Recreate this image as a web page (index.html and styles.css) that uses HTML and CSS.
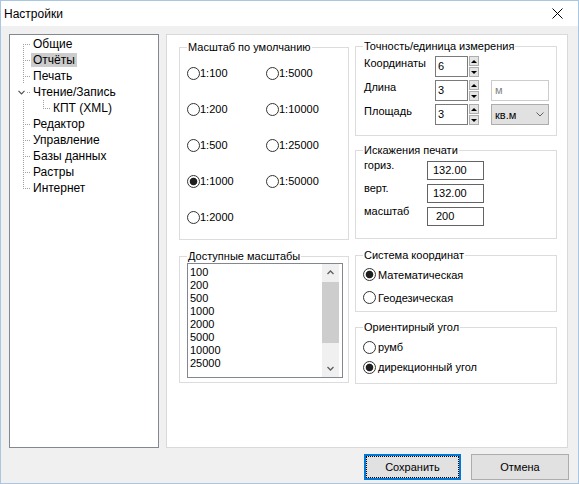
FILE: index.html
```html
<!DOCTYPE html>
<html lang="ru">
<head>
    <meta charset="UTF-8">
    <title>Настройки</title>
    <link rel="stylesheet" href="styles.css">
</head>
<body>
    <div class="window">
        <div class="titlebar">
            <span class="title">Настройки</span>
            <svg class="close" width="11" height="11" viewBox="0 0 11 11">
                <path d="M0.5 0.5 L10.5 10.5 M10.5 0.5 L0.5 10.5" stroke="#000" stroke-width="1" fill="none"/>
            </svg>
        </div>

        <div class="client">
            <div class="main">
                <ul class="tree">
                    <li class="node first"><span class="label">Общие</span></li>
                    <li class="node"><span class="label selected">Отчёты</span></li>
                    <li class="node"><span class="label">Печать</span></li>
                    <li class="node open">
                        <svg class="expander" width="7" height="5" viewBox="0 0 7 5">
                            <path d="M0.5 0.8 L3.5 3.8 L6.5 0.8" stroke="#505050" stroke-width="1.2" fill="none"/>
                        </svg>
                        <span class="label">Чтение/Запись</span>
                    </li>
                    <li class="node child"><span class="label">КПТ (XML)</span></li>
                    <li class="node"><span class="label">Редактор</span></li>
                    <li class="node"><span class="label">Управление</span></li>
                    <li class="node"><span class="label">Базы данных</span></li>
                    <li class="node"><span class="label">Растры</span></li>
                    <li class="node last"><span class="label">Интернет</span></li>
                </ul>

                <div class="panel">
                    <div class="column column-left">
                        <fieldset class="group g-scale">
                            <legend>Масштаб по умолчанию</legend>
                            <div class="radio-grid">
                                <label class="radio"><span class="radio-box"></span>1:100</label>
                                <label class="radio"><span class="radio-box"></span>1:5000</label>
                                <label class="radio"><span class="radio-box"></span>1:200</label>
                                <label class="radio"><span class="radio-box"></span>1:10000</label>
                                <label class="radio"><span class="radio-box"></span>1:500</label>
                                <label class="radio"><span class="radio-box"></span>1:25000</label>
                                <label class="radio"><span class="radio-box checked"></span>1:1000</label>
                                <label class="radio"><span class="radio-box"></span>1:50000</label>
                                <label class="radio"><span class="radio-box"></span>1:2000</label>
                            </div>
                        </fieldset>

                        <fieldset class="group g-list">
                            <legend>Доступные масштабы</legend>
                            <div class="listbox">
                                <ul class="list-items">
                                    <li>100</li>
                                    <li>200</li>
                                    <li>500</li>
                                    <li>1000</li>
                                    <li>2000</li>
                                    <li>5000</li>
                                    <li>10000</li>
                                    <li>25000</li>
                                </ul>
                                <div class="scrollbar">
                                    <div class="sb-btn">
                                        <svg width="7" height="5" viewBox="0 0 7 5"><path d="M0.5 4 L3.5 1 L6.5 4" stroke="#606060" stroke-width="1.3" fill="none"/></svg>
                                    </div>
                                    <div class="sb-track"><div class="sb-thumb"></div></div>
                                    <div class="sb-btn">
                                        <svg width="7" height="5" viewBox="0 0 7 5"><path d="M0.5 1 L3.5 4 L6.5 1" stroke="#606060" stroke-width="1.3" fill="none"/></svg>
                                    </div>
                                </div>
                            </div>
                        </fieldset>
                    </div>

                    <div class="column column-right">
                        <fieldset class="group g-accuracy">
                            <legend>Точность/единица измерения</legend>
                            <div class="fields">
                                <div class="field-row">
                                    <span class="field-label">Координаты</span>
                                    <div class="edit spin-edit">6</div>
                                    <div class="spin"><span class="spin-btn spin-up"></span><span class="spin-btn spin-down"></span></div>
                                </div>
                                <div class="field-row">
                                    <span class="field-label">Длина</span>
                                    <div class="edit spin-edit">3</div>
                                    <div class="spin"><span class="spin-btn spin-up"></span><span class="spin-btn spin-down"></span></div>
                                    <div class="unit unit-disabled">м</div>
                                </div>
                                <div class="field-row">
                                    <span class="field-label">Площадь</span>
                                    <div class="edit spin-edit">3</div>
                                    <div class="spin"><span class="spin-btn spin-up"></span><span class="spin-btn spin-down"></span></div>
                                    <div class="unit unit-combo">
                                        <span>кв.м</span>
                                        <svg width="8" height="5" viewBox="0 0 8 5"><path d="M0.5 0.5 L4 4 L7.5 0.5" stroke="#606060" stroke-width="1" fill="none"/></svg>
                                    </div>
                                </div>
                            </div>
                        </fieldset>

                        <fieldset class="group g-print">
                            <legend>Искажения печати</legend>
                            <div class="print-rows">
                                <div class="print-row">
                                    <span class="print-label">гориз.</span>
                                    <div class="print-edit">132.00</div>
                                </div>
                                <div class="print-row">
                                    <span class="print-label">верт.</span>
                                    <div class="print-edit">132.00</div>
                                </div>
                                <div class="print-row">
                                    <span class="print-label">масштаб</span>
                                    <div class="print-edit print-edit-scale">200</div>
                                </div>
                            </div>
                        </fieldset>

                        <fieldset class="group g-coords">
                            <legend>Система координат</legend>
                            <div class="radio-list">
                                <label class="radio"><span class="radio-box checked"></span>Математическая</label>
                                <label class="radio"><span class="radio-box"></span>Геодезическая</label>
                            </div>
                        </fieldset>

                        <fieldset class="group g-angle">
                            <legend>Ориентирный угол</legend>
                            <div class="radio-list">
                                <label class="radio"><span class="radio-box"></span>румб</label>
                                <label class="radio"><span class="radio-box checked"></span>дирекционный угол</label>
                            </div>
                        </fieldset>
                    </div>
                </div>
            </div>

            <div class="buttons">
                <button class="btn btn-default">Сохранить</button>
                <button class="btn btn-cancel">Отмена</button>
            </div>
        </div>
    </div>
</body>
</html>
```

FILE: styles.css
```css
/* General */
* {
    box-sizing: border-box;
}

body {
    margin: 0;
    font-family: "Liberation Sans", Arial, sans-serif;
    font-size: 11px;
    color: #000;
    background: #fff;
}

.window {
    width: 579px;
    height: 484px;
    border: 1px solid #a9c6e3;
    background: #f0f0f0;
    display: flex;
    flex-direction: column;
}

/* Title bar */
.titlebar {
    height: 25px;
    flex: none;
    background: #fff;
    display: flex;
    align-items: center;
    justify-content: space-between;
    padding: 0 15px 0 3px;
}

.title {
    font-size: 12px;
}

.client {
    flex: 1;
    padding: 8px 9px 3px 8px;
    display: flex;
    flex-direction: column;
}

.main {
    display: flex;
    gap: 7px;
    height: 414px;
}

/* Tree */
.tree {
    width: 150px;
    flex: none;
    margin: 0;
    padding: 1px 0 0;
    list-style: none;
    background: #fff;
    border: 1px solid #828790;
    font-size: 12px;
}

.node {
    position: relative;
    height: 16px;
    display: flex;
    align-items: center;
    padding-left: 21px;
}

.node .label {
    line-height: 14px;
    padding: 0 2px;
    white-space: nowrap;
}

.node .label.selected {
    background: #cccccc;
}

/* dotted tree lines, one pixel on / one off */
.node::before {
    content: "";
    position: absolute;
    left: 13px;
    top: 0;
    width: 1px;
    height: 16px;
    background: repeating-linear-gradient(to bottom, #a0a0a0 0 1px, transparent 1px 2px);
}

.node::after {
    content: "";
    position: absolute;
    left: 15px;
    top: 8px;
    width: 6px;
    height: 1px;
    background: repeating-linear-gradient(to right, #a0a0a0 0 1px, transparent 1px 2px);
}

.node.first::before {
    top: 8px;
    height: 8px;
}

.node.last::before {
    height: 9px;
}

.node.open::before {
    display: none;
}

.node.open::after {
    left: 17px;
    width: 4px;
}

.node.child {
    padding-left: 41px;
}

.node.child::after {
    left: 33px;
    top: 0;
    width: 8px;
    height: 9px;
    background:
        repeating-linear-gradient(to bottom, #a0a0a0 0 1px, transparent 1px 2px) left top / 1px 9px no-repeat,
        repeating-linear-gradient(to right, #a0a0a0 0 1px, transparent 1px 2px) left bottom / 8px 1px no-repeat;
}

.expander {
    position: absolute;
    left: 8px;
    top: 6px;
}

/* Right panel */
.panel {
    width: 402px;
    flex: none;
    border: 1px solid #d9d9d9;
    background: #fff;
    display: flex;
    gap: 6px;
    padding: 5px 10px 0 12px;
}

.column {
    display: flex;
    flex-direction: column;
}

.column-left {
    width: 170px;
}

.column-right {
    width: 202px;
}

fieldset.group {
    margin: 0;
    padding: 0;
    min-width: 0;
    border: 1px solid #dcdcdc;
}

.group legend {
    padding: 0 1px;
    margin-left: 7px;
    line-height: 13px;
}

.g-scale {
    margin-top: 1px !important;
    height: 199px;
}

.g-list {
    margin-top: 10px !important;
    height: 133px;
}

.g-accuracy {
    height: 96px;
}

.g-print {
    margin-top: 8px !important;
    height: 95px;
}

.g-coords {
    margin-top: 10px !important;
    height: 63px;
}

.g-angle {
    margin-top: 9px !important;
    height: 63px;
}

/* Radio buttons */
.radio {
    display: flex;
    align-items: center;
    gap: 2px;
    white-space: nowrap;
}

.radio-box {
    width: 13px;
    height: 13px;
    flex: none;
    border: 1px solid #333;
    border-radius: 50%;
    background: #fff;
}

.radio-box.checked {
    background: radial-gradient(circle, #1f1f1f 0 3.4px, #fff 4.2px);
}

.radio-grid {
    display: grid;
    grid-template-columns: 79px 79px;
    grid-auto-rows: 36px;
    padding: 1px 0 0 7px;
}

.radio-grid .radio {
    gap: 0;
}

.radio-list {
    padding: 1px 0 0 7px;
}

.g-coords .radio {
    height: 23px;
}

.g-angle .radio-list {
    padding-top: 3px;
}

.g-angle .radio {
    height: 20px;
}

/* List box */
.listbox {
    margin-left: 7px;
    width: 156px;
    height: 115px;
    border: 1px solid #828790;
    display: flex;
}

.list-items {
    flex: 1;
    list-style: none;
    margin: 0;
    padding: 2px 0 0 2px;
    line-height: 13px;
}

.scrollbar {
    width: 17px;
    margin-right: 3px;
    background: #f0f0f0;
    display: flex;
    flex-direction: column;
}

.sb-btn {
    height: 17px;
    display: flex;
    align-items: center;
    justify-content: center;
}

.sb-track {
    flex: 1;
    padding-top: 1px;
}

.sb-thumb {
    height: 61px;
    background: #cdcdcd;
}

/* Accuracy fields */
.fields {
    padding: 3px 0 0 8px;
    display: flex;
    flex-direction: column;
    gap: 3px;
}

.field-row {
    display: flex;
    align-items: flex-start;
    height: 21px;
}

.field-label {
    width: 71px;
    margin-top: 1px;
    line-height: 13px;
}

.edit {
    height: 21px;
    border: 1px solid #7a7a7a;
    background: #fff;
    padding-left: 2px;
    line-height: 19px;
}

.spin-edit {
    width: 33px;
}

.spin {
    margin-left: 1px;
    width: 10px;
    height: 21px;
    display: flex;
    flex-direction: column;
    gap: 1px;
}

.spin-btn {
    height: 10px;
    border: 1px solid #adadad;
    background: #e5e5e5;
    display: flex;
    align-items: center;
    justify-content: center;
}

.spin-up::after {
    content: "";
    border-left: 3px solid transparent;
    border-right: 3px solid transparent;
    border-bottom: 3px solid #000;
}

.spin-down::after {
    content: "";
    border-left: 3px solid transparent;
    border-right: 3px solid transparent;
    border-top: 3px solid #000;
}

.unit {
    margin-left: 12px;
    width: 58px;
    height: 21px;
}

.unit-disabled {
    border: 1px solid #cccccc;
    background: #fff;
    color: #838383;
    padding-left: 3px;
    line-height: 19px;
}

.unit-combo {
    border: 1px solid #adadad;
    background: #e1e1e1;
    display: flex;
    align-items: center;
    justify-content: space-between;
    padding: 0 4px 0 3px;
}

/* Print distortion */
.print-rows {
    padding: 4px 0 0 8px;
    display: flex;
    flex-direction: column;
    gap: 4px;
}

.print-row {
    display: flex;
    align-items: flex-start;
    height: 19px;
}

.print-label {
    width: 63px;
    margin-top: -2px;
    line-height: 13px;
}

.print-edit {
    width: 57px;
    height: 19px;
    border: 1px solid #646464;
    background: #fff;
    padding-left: 5px;
    line-height: 17px;
}

.print-edit-scale {
    padding-left: 8px;
}

/* Buttons */
.buttons {
    display: flex;
    justify-content: flex-end;
    gap: 10px;
    margin-top: 6px;
}

.btn {
    position: relative;
    width: 97px;
    height: 26px;
    padding: 0;
    font: inherit;
    color: #000;
    background: #e1e1e1;
    border: 1px solid #adadad;
}

.btn-cancel {
    width: 98px;
}

.btn-default {
    border: 2px solid #0078d7;
}

.btn-default::after {
    content: "";
    position: absolute;
    inset: 0;
    border: 1px dotted #000;
}
```
